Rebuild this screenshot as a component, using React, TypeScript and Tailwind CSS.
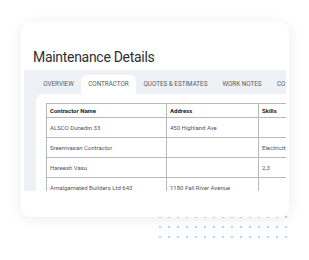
const tabs = [
  { label: "OVERVIEW", w: "w-[45px]" },
  { label: "CONTRACTOR", w: "w-[55px]" },
  { label: "QUOTES & ESTIMATES", w: "w-[79px]" },
  { label: "WORK NOTES", w: "w-[54px]" },
  { label: "CO", w: "w-[30px]" },
];

const rows = [
  { name: "ALSCO Dunedin 33", address: "450 Highland Ave", skills: "" },
  { name: "Sreenivasan Contractor", address: "", skills: "Electricity" },
  { name: "Hareesh Vasu", address: "", skills: "2,3" },
  { name: "Amalgamated Builders Ltd 643", address: "1180 Fall River Avenue", skills: "" },
];

export default function App() {
  return (
    <div className="relative w-[309px] h-[260px] bg-white overflow-hidden pt-[22px] pl-[21px] font-['Roboto',sans-serif]">
      {/* dotted decoration behind the card */}
      <div className="absolute left-[159px] top-[216px] grid grid-cols-[repeat(15,9px)] grid-rows-[repeat(3,10px)]">
        {Array.from({ length: 45 }).map((_, i) => (
          <span key={i} className="w-[2px] h-[2px] bg-[#9fe5d9]" />
        ))}
      </div>

      {/* Card */}
      <div className="relative z-10 w-[268px] h-[195px] rounded-[9px] bg-white shadow-[0_2px_14px_rgba(0,0,0,0.08)] pt-[25px] pl-[3px]">
        <h1 className="pl-[9px] text-[14px] leading-[20px] tracking-[-0.3px] text-[#2f2f2f]">
          Maintenance Details
        </h1>

        <div className="mt-[3px] w-[262px] h-[121px] bg-[#eef2f7] overflow-hidden pl-[12px]">
          {/* Tabs */}
          <div className="flex pt-[5px] h-[24px] whitespace-nowrap">
            {tabs.map((t) => (
              <div
                key={t.label}
                className={`${t.w} shrink-0 h-[19px] flex items-center justify-center text-[6.3px] text-[#5a5a5a] ${
                  t.label === "CONTRACTOR" ? "bg-white rounded-t-[6px]" : ""
                } ${t.label === "CO" ? "justify-start pl-[8px]" : ""}`}
              >
                {t.label}
              </div>
            ))}
          </div>

          {/* Content */}
          <div className="bg-white rounded-tl-[7px] h-[97px] w-[260px] pl-[10px] pt-[9px]">
            <table className="table-fixed w-[272px] border-collapse text-[6px] text-[#555] whitespace-nowrap">
              <colgroup>
                <col className="w-[120px]" />
                <col className="w-[92px]" />
                <col className="w-[60px]" />
              </colgroup>
              <thead>
                <tr className="h-[14px]">
                  <th className="border border-[#b8b8b8] text-left font-bold text-[#222] px-[3px]">
                    Contractor Name
                  </th>
                  <th className="border border-[#b8b8b8] text-left font-bold text-[#222] px-[3px]">
                    Address
                  </th>
                  <th className="border border-[#b8b8b8] text-left font-bold text-[#222] px-[3px]">
                    Skills
                  </th>
                </tr>
              </thead>
              <tbody>
                {rows.map((r) => (
                  <tr key={r.name} className="h-[20px]">
                    <td className="border border-[#b8b8b8] px-[3px]">{r.name}</td>
                    <td className="border border-[#b8b8b8] px-[3px]">{r.address}</td>
                    <td className="border border-[#b8b8b8] px-[3px]">{r.skills}</td>
                  </tr>
                ))}
              </tbody>
            </table>
          </div>
        </div>
      </div>
    </div>
  );
}
